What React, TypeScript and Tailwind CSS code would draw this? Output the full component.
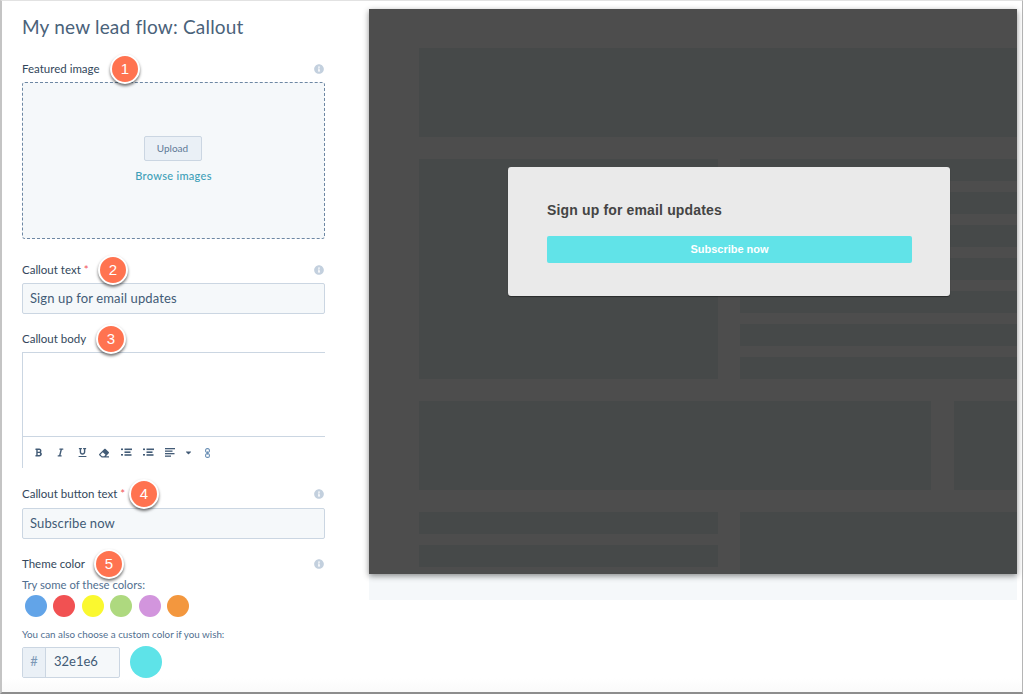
import { ReactNode } from "react";
import { FaBold, FaCaretDown, FaEraser, FaInfoCircle, FaItalic, FaUnderline } from "react-icons/fa";

function Badge({ n, left }: { n: number; left: number }) {
  return (
    <span
      className="absolute top-1/2 flex h-[30px] w-[30px] -translate-x-1/2 -translate-y-1/2 items-center justify-center rounded-full border-2 border-white bg-[#ff7350] font-['Liberation_Sans',sans-serif] text-[15px] text-white shadow-[0_2px_3px_rgba(0,0,0,0.55)]"
      style={{ left }}
    >
      {n}
    </span>
  );
}

function Label({
  text,
  required,
  n,
  badgeLeft,
  info = true,
  className,
}: {
  text: string;
  required?: boolean;
  n: number;
  badgeLeft: number;
  info?: boolean;
  className: string;
}) {
  return (
    <div className={`relative flex h-[14px] w-[302px] items-center justify-between text-[11.5px] text-[#33475b] ${className}`}>
      <span>
        {text}
        {required && <span className="ml-[3px] text-[#f2545b]">*</span>}
      </span>
      <Badge n={n} left={badgeLeft} />
      {info && <FaInfoCircle className="text-[10px] text-[#c3d0de]" />}
    </div>
  );
}

function TextInput({ value, className }: { value: string; className: string }) {
  return (
    <div className={`flex h-[31px] w-[303px] items-center rounded-[2px] border border-[#cbd6e2] bg-[#f5f8fa] px-[7px] text-[13px] tracking-[0.12px] text-[#425b76] ${className}`}>
      {value}
    </div>
  );
}

function Tool({ children, w = "w-[22px]" }: { children: ReactNode; w?: string }) {
  return <span className={`flex items-center justify-center ${w}`}>{children}</span>;
}

function ListIcon() {
  return (
    <svg width="11" height="9" viewBox="0 0 11 9" fill="#425b76">
      <rect x="0" y="0.5" width="2" height="1.6" />
      <rect x="0" y="6" width="2" height="1.6" />
      <rect x="3.5" y="0.5" width="7.5" height="1.6" />
      <rect x="3.5" y="3.4" width="6" height="1.6" />
      <rect x="3.5" y="6.2" width="7" height="1.6" />
    </svg>
  );
}

function AlignIcon() {
  return (
    <svg width="10" height="9" viewBox="0 0 10 9" fill="#425b76">
      <rect x="0" y="0" width="10" height="1.3" />
      <rect x="0" y="2.5" width="7.5" height="1.3" />
      <rect x="0" y="5" width="9.5" height="1.3" />
      <rect x="0" y="7.5" width="6" height="1.3" />
    </svg>
  );
}

function Block({ className }: { className: string }) {
  return <div className={`shrink-0 bg-[#464949] ${className}`} />;
}

const swatches = ["bg-[#62a4e8]", "bg-[#f15152]", "bg-[#faf82f]", "bg-[#aed97f]", "bg-[#d295dd]", "bg-[#f3973e]"];

function EditorPanel() {
  return (
    <div className="w-[369px] shrink-0 pl-[22px] font-['Lato',sans-serif]">
      <h1 className="mt-[14px] h-[24px] text-[19px] leading-[24px] font-normal tracking-[0.2px] text-[#4a627a]">
        My new lead flow: Callout
      </h1>

      <Label text="Featured image" n={1} badgeLeft={103} className="mt-[23px]" />
      <div className="mt-[6px] flex h-[157px] w-[303px] flex-col items-center rounded-[3px] border border-dashed border-[#6d87a3] bg-[#f5f8fa] pt-[53px]">
        <div className="mr-[2px] flex h-[25px] w-[58px] items-center justify-center rounded-[2px] border border-[#cbd6e2] bg-[#eaf0f6] text-[10px] font-normal text-[#5f7a96]">
          Upload
        </div>
        <div className="mt-[7px] text-[11px] font-medium tracking-[0.3px] text-[#3e9fb8]">Browse images</div>
      </div>

      <Label text="Callout text" required n={2} badgeLeft={91} className="mt-[24px]" />
      <TextInput value="Sign up for email updates" className="mt-[6px]" />

      <Label text="Callout body" n={3} badgeLeft={89} info={false} className="mt-[18px]" />
      <div className="mt-[6px] h-[116px] w-[303px] border-l border-[#cbd6e2]">
        <div className="h-[85px] border-y border-[#cbd6e2]" />
        <div className="flex h-[31px] items-center pl-[4px] text-[9px] text-[#425b76]">
          <Tool><FaBold /></Tool>
          <Tool><FaItalic /></Tool>
          <Tool><FaUnderline /></Tool>
          <Tool><FaEraser className="text-[10px]" /></Tool>
          <Tool><ListIcon /></Tool>
          <Tool><ListIcon /></Tool>
          <Tool><AlignIcon /></Tool>
          <Tool w="w-[15px]"><FaCaretDown /></Tool>
          <Tool>
            <svg width="5" height="10" viewBox="0 0 5 10" fill="none" stroke="#6a8fb5" strokeWidth="1.1">
              <rect x="0.6" y="0.6" width="3.8" height="3.8" rx="1.5" />
              <rect x="0.6" y="5.6" width="3.8" height="3.8" rx="1.5" />
              <path d="M2.5 3.5v3" />
            </svg>
          </Tool>
        </div>
      </div>

      <Label text="Callout button text" required n={4} badgeLeft={122} className="mt-[19px]" />
      <TextInput value="Subscribe now" className="mt-[7px]" />

      <Label text="Theme color" n={5} badgeLeft={87} className="mt-[18px]" />
      <div className="mt-[7px] text-[11.3px] leading-[14px] text-[#516f90]">Try some of these colors:</div>
      <div className="mt-[3px] ml-[3px] flex gap-[6.4px]">
        {swatches.map((c) => (
          <span key={c} className={`h-[22px] w-[22px] rounded-full ${c}`} />
        ))}
      </div>
      <div className="mt-[10px] text-[9.8px] leading-[14px] text-[#516f90]">You can also choose a custom color if you wish:</div>
      <div className="mt-[5px] flex items-center">
        <div className="flex h-[31px] w-[98px] rounded-[2px] border border-[#cbd6e2] bg-[#f5f8fa] text-[13px] text-[#425b76]">
          <span className="flex w-[23px] items-center justify-center border-r border-[#cbd6e2] bg-[#eaf0f6] text-[#7c98b6]">#</span>
          <span className="flex items-center pl-[8px]">32e1e6</span>
        </div>
        <span className="ml-[10px] h-[32px] w-[32px] rounded-full bg-[#5ee3e8]" />
      </div>
    </div>
  );
}

function Preview() {
  return (
    <div className="mt-[8px] w-[648px] shrink-0">
      <div className="relative h-[565px] overflow-hidden bg-[#4d4d4d] pt-[39px] pl-[50px] shadow-[0_2px_6px_rgba(0,0,0,0.45)]">
        <Block className="h-[89px] w-[600px]" />
        <div className="mt-[22px] flex gap-[22px]">
          <Block className="h-[220px] w-[299px]" />
          <div className="flex w-[280px] shrink-0 flex-col gap-[11px]">
            {[0, 1, 2, 3, 4, 5, 6].map((i) => (
              <Block key={i} className="h-[22px]" />
            ))}
          </div>
        </div>
        <div className="mt-[22px] flex gap-[23px]">
          <Block className="h-[89px] w-[512px]" />
          <Block className="h-[89px] w-[65px]" />
        </div>
        <div className="mt-[22px] flex gap-[22px]">
          <div className="flex w-[299px] shrink-0 flex-col gap-[11px]">
            <Block className="h-[22px]" />
            <Block className="h-[22px]" />
          </div>
          <Block className="h-[62px] w-[280px]" />
        </div>

        <div className="absolute top-[158px] left-[139px] h-[129px] w-[442px] rounded-[3px] bg-[#eaeaea] px-[39px] pt-[34px] shadow-[0_1px_1px_rgba(0,0,0,0.4)] font-['Liberation_Sans',sans-serif]">
          <div className="text-[14px] leading-[18px] font-bold tracking-[0.15px] text-[#444444]">Sign up for email updates</div>
          <div className="mt-[17px] flex h-[27px] w-[365px] items-center justify-center rounded-[2px] bg-[#61e3e8] text-[11px] font-bold text-white">
            Subscribe now
          </div>
        </div>
      </div>
      <div className="h-[26px] bg-[#f5f8fa]" />
    </div>
  );
}

export default function App() {
  return (
    <div className="h-[695px] w-[1024px] overflow-hidden bg-white">
      <div className="h-[694px] w-[1023px] border-t border-r border-b-2 border-l-2 border-t-[#e2e2e2] border-r-[#b5b5b5] border-b-[#8d8d8d] border-l-[#c4c4c4] bg-[linear-gradient(to_bottom,#ffffff_98%,#fafafa_100%)]">
        <div className="-ml-[2px] flex">
          <EditorPanel />
          <Preview />
        </div>
      </div>
    </div>
  );
}
